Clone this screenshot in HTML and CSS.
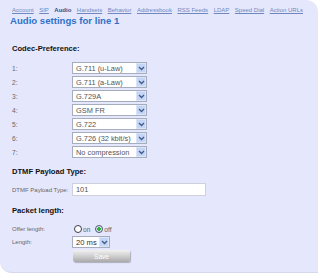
FILE: index.html
```html
<!DOCTYPE html>
<html>
<head>
    <title>Audio settings</title>
    <link rel="stylesheet" href="styles.css">
</head>
<body>
    <div class="panel">
        <nav class="tabs">
            <a href="#">Account</a>
            <a href="#">SIP</a>
            <a href="#" class="active">Audio</a>
            <a href="#">Handsets</a>
            <a href="#">Behavior</a>
            <a href="#">Addressbook</a>
            <a href="#">RSS Feeds</a>
            <a href="#">LDAP</a>
            <a href="#">Speed Dial</a>
            <a href="#">Action URLs</a>
        </nav>

        <h1>Audio settings for line 1</h1>

        <h2>Codec-Preference:</h2>
        <div class="codecs">
            <div class="row"><span class="label">1:</span><div class="select wide"><span>G.711 (u-Law)</span><span class="arrow"><svg width="7" height="5" viewBox="0 0 7 5"><path d="M1 1 L3.5 3.5 L6 1" fill="none" stroke="#3f5a8c" stroke-width="1.3"/></svg></span></div></div>
            <div class="row"><span class="label">2:</span><div class="select wide"><span>G.711 (a-Law)</span><span class="arrow"><svg width="7" height="5" viewBox="0 0 7 5"><path d="M1 1 L3.5 3.5 L6 1" fill="none" stroke="#3f5a8c" stroke-width="1.3"/></svg></span></div></div>
            <div class="row"><span class="label">3:</span><div class="select wide"><span>G.729A</span><span class="arrow"><svg width="7" height="5" viewBox="0 0 7 5"><path d="M1 1 L3.5 3.5 L6 1" fill="none" stroke="#3f5a8c" stroke-width="1.3"/></svg></span></div></div>
            <div class="row"><span class="label">4:</span><div class="select wide"><span>GSM FR</span><span class="arrow"><svg width="7" height="5" viewBox="0 0 7 5"><path d="M1 1 L3.5 3.5 L6 1" fill="none" stroke="#3f5a8c" stroke-width="1.3"/></svg></span></div></div>
            <div class="row"><span class="label">5:</span><div class="select wide"><span>G.722</span><span class="arrow"><svg width="7" height="5" viewBox="0 0 7 5"><path d="M1 1 L3.5 3.5 L6 1" fill="none" stroke="#3f5a8c" stroke-width="1.3"/></svg></span></div></div>
            <div class="row"><span class="label">6:</span><div class="select wide"><span>G.726 (32 kbit/s)</span><span class="arrow"><svg width="7" height="5" viewBox="0 0 7 5"><path d="M1 1 L3.5 3.5 L6 1" fill="none" stroke="#3f5a8c" stroke-width="1.3"/></svg></span></div></div>
            <div class="row"><span class="label">7:</span><div class="select wide"><span>No compression</span><span class="arrow"><svg width="7" height="5" viewBox="0 0 7 5"><path d="M1 1 L3.5 3.5 L6 1" fill="none" stroke="#3f5a8c" stroke-width="1.3"/></svg></span></div></div>
        </div>

        <h2 class="section">DTMF Payload Type:</h2>
        <div class="row input-row">
            <span class="label small">DTMF Payload Type:</span>
            <div class="text-input">101</div>
        </div>

        <h2 class="section packet">Packet length:</h2>
        <div class="row offer-row">
            <span class="label small">Offer length:</span>
            <span class="radio"></span><span class="radio-text">on</span>
            <span class="radio checked"></span><span class="radio-text">off</span>
        </div>
        <div class="row length-row">
            <span class="label small">Length:</span>
            <div class="select short"><span>20 ms</span><span class="arrow"><svg width="7" height="5" viewBox="0 0 7 5"><path d="M1 1 L3.5 3.5 L6 1" fill="none" stroke="#3f5a8c" stroke-width="1.3"/></svg></span></div>
        </div>
        <div class="row">
            <span class="label"></span>
            <button class="save">Save</button>
        </div>
    </div>
</body>
</html>
```

FILE: styles.css
```css
* {
    box-sizing: border-box;
    margin: 0;
    padding: 0;
}

body {
    font-family: "Liberation Sans", Arial, sans-serif;
    background-color: #fff;
    width: 320px;
    height: 274px;
    overflow: hidden;
}

.panel {
    width: 318px;
    height: 273px;
    background-color: #e5e7fc;
    border-radius: 0 12px 0 12px;
    border-bottom: 1px solid #d6d8ee;
    padding: 6px 0 0 12px;
}

.tabs {
    display: flex;
    gap: 5.5px;
    height: 8px;
    line-height: 8px;
    font-size: 6px;
    white-space: nowrap;
}

.tabs a {
    color: #6f87bd;
    text-decoration: underline;
}

.tabs a.active {
    color: #2d4f8e;
    font-weight: bold;
    text-decoration: none;
}

h1 {
    margin: 1px 0 0 -2px;
    height: 12px;
    line-height: 12px;
    font-size: 9.6px;
    font-weight: bold;
    color: #2f72c8;
}

h2 {
    margin-top: 17px;
    height: 10px;
    line-height: 10px;
    font-size: 7.6px;
    font-weight: bold;
    color: #111;
}

h2.section {
    margin-top: 9px;
}

h2.packet {
    margin-top: 10px;
}

.codecs {
    margin-top: 8px;
    display: flex;
    flex-direction: column;
    gap: 2px;
}

.row {
    display: flex;
    align-items: center;
}

.label {
    width: 60px;
    flex-shrink: 0;
    font-size: 6.6px;
    color: #666;
}

.label.small {
    font-size: 6px;
}

.select {
    height: 12px;
    background-color: #fff;
    border: 1px solid #a6aebd;
    display: flex;
    align-items: center;
    justify-content: space-between;
    padding-left: 3px;
    font-size: 7.4px;
    color: #555;
}

.select.wide {
    width: 75px;
}

.select.short {
    width: 38px;
    font-size: 7.6px;
    color: #333;
}

.arrow {
    width: 10px;
    height: 10px;
    background-color: #c5d5f5;
    border: 1px solid #dbe5fa;
    display: flex;
    align-items: center;
    justify-content: center;
}

.input-row {
    margin-top: 6px;
}

.text-input {
    width: 134px;
    height: 13px;
    line-height: 11px;
    background-color: #fff;
    border: 1px solid #cfd1dd;
    padding-left: 3px;
    font-size: 7.4px;
    color: #555;
}

.offer-row {
    margin-top: 8px;
    height: 10px;
}

.radio {
    width: 8px;
    height: 8px;
    margin-left: 2px;
    border: 1px solid #3c3c4a;
    border-radius: 50%;
    background-color: #fff;
}

.radio.checked {
    margin-left: 5px;
    background: radial-gradient(circle, #3cae3c 0 1.6px, #dde8f8 2px);
    border-color: #4a5870;
}

.radio-text {
    margin-left: 1px;
    font-size: 6.6px;
    color: #666;
}

.length-row {
    margin-top: 2px;
}

.save {
    margin: 2px 0 0 1px;
    width: 57px;
    height: 12px;
    border: none;
    border-radius: 2px;
    background: linear-gradient(#f2f2f2, #c8c8c8 60%, #a9a9a9);
    box-shadow: 1px 1px 1px rgba(0, 0, 0, 0.25);
    color: #fff;
    font-family: "Liberation Sans", Arial, sans-serif;
    font-size: 6.6px;
}
```
